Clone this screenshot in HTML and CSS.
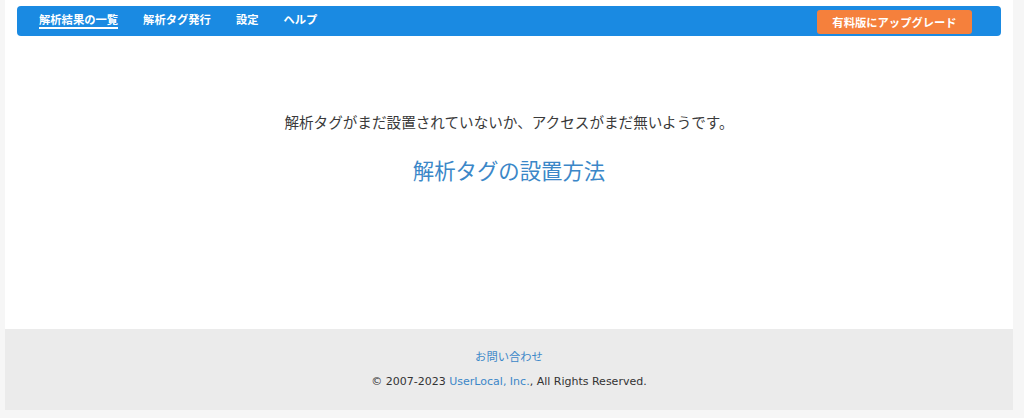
FILE: index.html
```html
<!DOCTYPE html>
<html lang="ja">
<head>
  <meta charset="UTF-8">
  <title>解析結果の一覧 | UserLocal</title>
  <meta name="viewport" content="width=device-width, initial-scale=1.0">
  <link rel="stylesheet" href="styles.css">
</head>
<body>

  <div class="wrap">
    <div class="main">
      <nav class="navbar">
        <a class="nav-link active" href="#">解析結果の一覧</a>
        <a class="nav-link" href="#">解析タグ発行</a>
        <a class="nav-link" href="#">設定</a>
        <a class="nav-link" href="#">ヘルプ</a>
        <a class="upgrade" href="#">有料版にアップグレード</a>
      </nav>

      <div class="empty">
        <p>解析タグがまだ設置されていないか、アクセスがまだ無いようです。</p>
        <a class="howto" href="#">解析タグの設置方法</a>
      </div>
    </div>

    <footer>
      <p class="contact"><a href="#">お問い合わせ</a></p>
      <p class="copy">&copy; 2007-2023 <a href="#">UserLocal, Inc.</a>, All Rights Reserved.</p>
    </footer>
  </div>

</body>
</html>
```

FILE: styles.css
```css
:root{
  --nav:#1a8ae2;--orange:#f5803c;--link:#3b87c8;
  --txt:#333;--page:#f6f6f6;--foot:#ebebeb
}
*{box-sizing:border-box;margin:0;padding:0}
body{
  font-family:"Noto Sans CJK JP","DejaVu Sans",sans-serif;
  background:var(--page);color:var(--txt)
}
a{text-decoration:none}
.wrap{margin:0 11px 0 5px;background:#fff}
.main{height:329px;padding:6px 12px 0}

/* barra superior */
.navbar{
  height:30px;background:var(--nav);border-radius:4px;
  display:flex;align-items:flex-start;padding:0 29px 0 22px
}
.nav-link{
  color:#fff;font-size:11.3px;font-weight:700;line-height:14px;
  margin:6px 25px 0 0;padding-bottom:1px;border-bottom:2px solid transparent
}
.nav-link.active{border-bottom-color:#fff}
.upgrade{
  margin:4px 0 0 auto;height:24px;width:155px;
  background:var(--orange);color:#fff;border-radius:3px;
  font-size:11.3px;font-weight:700;line-height:24px;text-align:center
}

.empty{text-align:center;padding-top:76px}
.empty p{font-size:14.6px;line-height:20px;color:#3a3a3a}
.howto{
  display:inline-block;margin-top:23px;
  font-size:21.4px;line-height:30px;color:var(--link)
}

footer{background:var(--foot);height:81px;padding-top:19px;text-align:center}
footer a{color:var(--link)}
.contact{font-size:11.3px;line-height:16px}
.copy{
  margin-top:10px;font-size:11px;line-height:16px;
  font-family:"DejaVu Sans","Noto Sans CJK JP",sans-serif
}
```
